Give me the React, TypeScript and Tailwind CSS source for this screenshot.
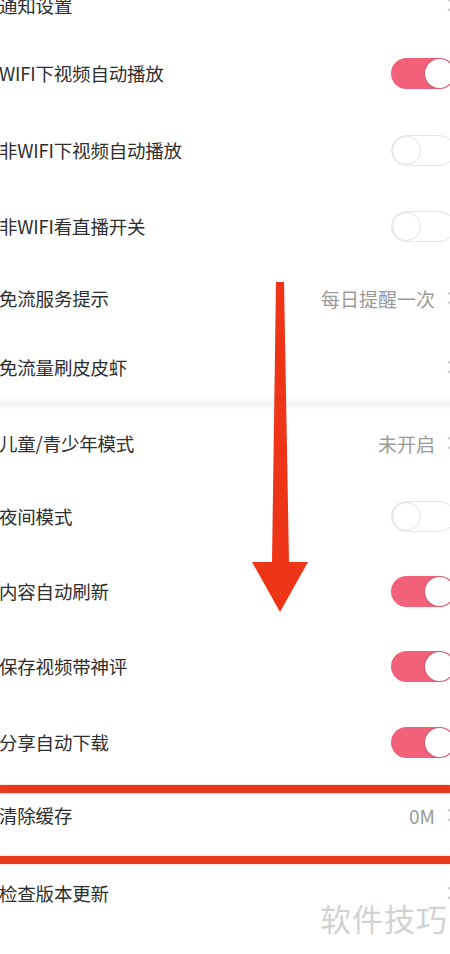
import React from "react";

type Row =
  | { kind: "toggle"; label: string; on: boolean; h: number }
  | { kind: "link"; label: string; value?: string; h: number }
  | { kind: "gap"; h: number };

const ROWS: Row[] = [
  { kind: "link", label: "通知设置", h: 68 },
  { kind: "toggle", label: "WIFI下视频自动播放", on: true, h: 68 },
  { kind: "toggle", label: "非WIFI下视频自动播放", on: false, h: 86 },
  { kind: "toggle", label: "非WIFI看直播开关", on: false, h: 66 },
  { kind: "link", label: "免流服务提示", value: "每日提醒一次", h: 78 },
  { kind: "link", label: "免流量刷皮皮虾", h: 60 },
  { kind: "gap", h: 13 },
  { kind: "link", label: "儿童/青少年模式", value: "未开启", h: 66 },
  { kind: "toggle", label: "夜间模式", on: false, h: 80 },
  { kind: "toggle", label: "内容自动刷新", on: true, h: 70 },
  { kind: "toggle", label: "保存视频带神评", on: true, h: 80 },
  { kind: "toggle", label: "分享自动下载", on: true, h: 72 },
  { kind: "link", label: "清除缓存", value: "0M", h: 74 },
  { kind: "link", label: "检查版本更新", h: 82 },
  { kind: "link", label: "社区公约", h: 60 },
];

export default function App() {
  return (
    <div
      className="relative h-[954px] w-[450px] overflow-hidden bg-white"
      style={{ fontFamily: '"Noto Sans CJK SC", "Noto Sans", sans-serif' }}
    >
      <div className="-ml-[1px] -mt-[29px] w-[467px]">
        {ROWS.map((r, i) =>
          r.kind === "gap" ? (
            <div
              key={i}
              className="bg-gradient-to-b from-white via-[#f4f4f4] to-white"
              style={{ height: r.h }}
            />
          ) : (
            <div
              key={i}
              className="flex items-center justify-between pr-[11px]"
              style={{ height: r.h }}
            >
              <span className="text-[18.5px] leading-none tracking-[-0.2px] text-[#2e2e2e]">
                {r.label}
              </span>
              {r.kind === "toggle" ? (
                <Toggle on={r.on} />
              ) : (
                <span className="flex items-center">
                  {r.value && (
                    <span className="text-[19px] leading-none text-[#9a9a9a]">
                      {r.value}
                    </span>
                  )}
                  <svg
                    className="ml-[12px] h-[14px] w-[8px]"
                    viewBox="0 0 8 14"
                    fill="none"
                  >
                    <path
                      d="M1.5 1.5L6.5 7L1.5 12.5"
                      stroke="#cacaca"
                      strokeWidth="1.6"
                      strokeLinecap="round"
                      strokeLinejoin="round"
                    />
                  </svg>
                </span>
              )}
            </div>
          ),
        )}
      </div>

      {/* 红色标注框线 */}
      <div className="absolute left-0 top-[785px] h-[8px] w-full bg-[#e8391d] shadow-[0_0_2px_#f4a08f]" />
      <div className="absolute left-0 top-[856px] h-[8px] w-full bg-[#e8391d] shadow-[0_0_2px_#f4a08f]" />

      {/* 向下箭头 */}
      <svg
        className="pointer-events-none absolute left-0 top-0"
        width="450"
        height="954"
        viewBox="0 0 450 954"
      >
        <polygon
          points="276,282 284,282 289,562 308,562 280,612 252,562 272,562"
          fill="#ee3518"
        />
      </svg>

      {/* 水印 */}
      <span className="absolute left-[320px] top-[902px] text-[31px] leading-none tracking-[1px] text-[#d2d2d2]">
        软件技巧
      </span>
    </div>
  );
}

function Toggle({ on }: { on: boolean }) {
  return (
    <span
      className={`flex h-[31px] w-[64px] shrink-0 items-center rounded-full p-[1px] ${
        on
          ? "justify-end bg-[#f2607a]"
          : "justify-start border border-[#e4e4e4] bg-white"
      }`}
    >
      <span
        className={`block h-[29px] w-[29px] rounded-full bg-white ${
          on
            ? "shadow-[0_0_1px_1px_rgba(150,80,90,0.35)]"
            : "-ml-[1px] border border-[#e0e0e0]"
        }`}
      />
    </span>
  );
}
